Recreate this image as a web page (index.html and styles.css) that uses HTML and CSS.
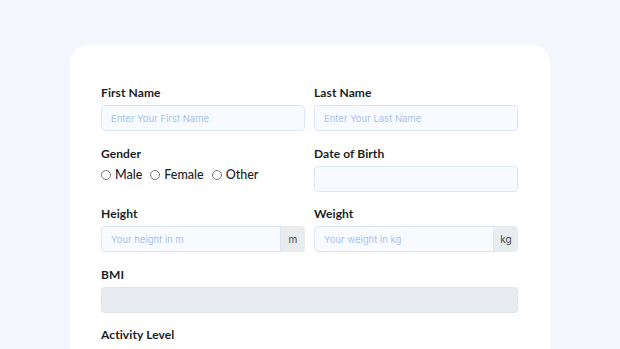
FILE: index.html
```html
<!DOCTYPE html>
<html lang="en">
<head>
    <meta charset="UTF-8">
    <meta name="viewport" content="width=device-width, initial-scale=1.0">
    <title>Health Profile</title>
    <link rel="stylesheet" href="styles.css">
</head>
<body>
    <form class="card">
        <div class="row">
            <div class="field">
                <label>First Name</label>
                <input type="text" placeholder="Enter Your First Name">
            </div>
            <div class="field">
                <label>Last Name</label>
                <input type="text" placeholder="Enter Your Last Name">
            </div>
        </div>
        <div class="row">
            <div class="field">
                <label>Gender</label>
                <div class="radios">
                    <span class="radio"><span class="dot"></span>Male</span>
                    <span class="radio"><span class="dot"></span>Female</span>
                    <span class="radio"><span class="dot"></span>Other</span>
                </div>
            </div>
            <div class="field">
                <label>Date of Birth</label>
                <input type="text">
            </div>
        </div>
        <div class="row">
            <div class="field">
                <label>Height</label>
                <div class="group">
                    <input type="text" placeholder="Your height in m">
                    <span class="unit">m</span>
                </div>
            </div>
            <div class="field">
                <label>Weight</label>
                <div class="group">
                    <input type="text" placeholder="Your weight in kg">
                    <span class="unit">kg</span>
                </div>
            </div>
        </div>
        <div class="field">
            <label>BMI</label>
            <input type="text" class="readonly" readonly>
        </div>
        <div class="field last">
            <label>Activity Level</label>
        </div>
    </form>
</body>
</html>
```

FILE: styles.css
```css
body {
    margin: 0;
    background: #f3f6fd;
    font-family: Lato, "Noto Sans", sans-serif;
    color: #1d1d1f;
    overflow: hidden;
}
.card {
    box-sizing: border-box;
    width: 480px;
    height: 304px;
    margin: 45px 0 0 70px;
    padding: 40px 32px 0 31px;
    background: #fff;
    border-radius: 18px 18px 0 0;
    overflow: hidden;
}
.row {
    display: grid;
    grid-template-columns: 204px 204px;
    column-gap: 9px;
}
.field {
    display: flex;
    flex-direction: column;
    margin-bottom: 14.5px;
}
.field.last {
    margin-bottom: 0;
}
label {
    font-size: 12px;
    font-weight: 700;
    line-height: 16px;
    margin-bottom: 4px;
    letter-spacing: 0.1px;
}
input {
    box-sizing: border-box;
    width: 100%;
    height: 26px;
    padding: 0 9px;
    border: 1px solid #dbe6f8;
    border-radius: 4px;
    background: #f7fbff;
    font-family: Inter, sans-serif;
    font-size: 9.5px;
    outline: none;
}
input::placeholder {
    color: #a9c2ec;
}
.readonly {
    width: 417px;
    background: #e8ebef;
    border-color: #dfe4ea;
}
.radios {
    display: flex;
    align-items: center;
    gap: 8px;
    height: 22px;
    margin-top: -2px;
}
.radio {
    display: flex;
    align-items: center;
    font-size: 12.5px;
    font-weight: 500;
}
.dot {
    width: 8px;
    height: 8px;
    border: 1px solid #777;
    border-radius: 50%;
    margin-right: 4px;
}
.group {
    display: flex;
}
.group input {
    border-radius: 4px 0 0 4px;
}
.unit {
    flex: none;
    display: flex;
    align-items: center;
    justify-content: center;
    width: 24px;
    height: 26px;
    background: #e9ecef;
    border-radius: 0 4px 4px 0;
    font-family: Inter, sans-serif;
    font-size: 10px;
    color: #444;
}
```
